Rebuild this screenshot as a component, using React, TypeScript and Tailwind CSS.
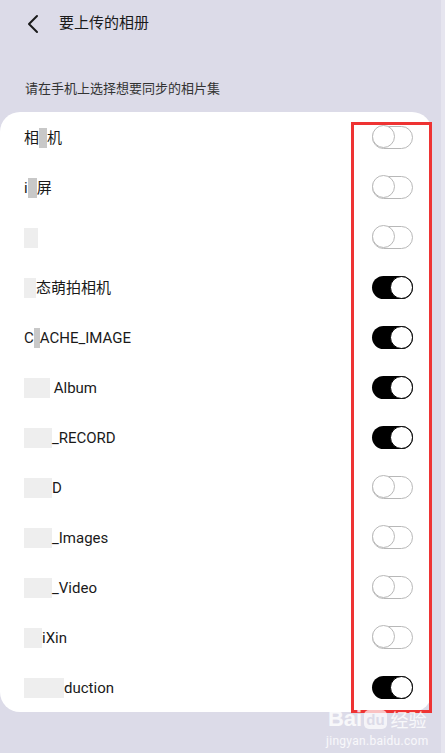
import React from "react";

type Row = { parts: (string | { m: number; w?: number; light?: boolean })[]; on: boolean };

const rows: Row[] = [
  { parts: ["相", { m: 1, w: 8 }, "机"], on: false },
  { parts: ["i", { m: 1, w: 9 }, "屏"], on: false },
  { parts: [{ m: 1, w: 14, light: true }], on: false },
  { parts: [{ m: 1, w: 12, light: true }, "态萌拍相机"], on: true },
  { parts: ["C", { m: 1, w: 6 }, "ACHE_IMAGE"], on: true },
  { parts: [{ m: 1, w: 26, light: true }, " Album"], on: true },
  { parts: [{ m: 1, w: 28, light: true }, "_RECORD"], on: true },
  { parts: [{ m: 1, w: 28, light: true }, "D"], on: false },
  { parts: [{ m: 1, w: 28, light: true }, "_Images"], on: false },
  { parts: [{ m: 1, w: 28, light: true }, "_Video"], on: false },
  { parts: [{ m: 1, w: 18, light: true }, "iXin"], on: false },
  { parts: [{ m: 1, w: 40, light: true }, "duction"], on: true },
];

function Toggle({ on }: { on: boolean }) {
  if (on) {
    return (
      <div className="relative h-[23px] w-[41px] rounded-full bg-black">
        <div className="absolute right-0 top-0 h-[23px] w-[23px] rounded-full border-[1.5px] border-black bg-white" />
      </div>
    );
  }
  return (
    <div className="relative h-[23px] w-[41px] rounded-full border-[1.5px] border-[#b8b8b8] bg-white">
      <div className="absolute left-[-1.5px] top-[-1.5px] h-[23px] w-[23px] rounded-full border-[1.5px] border-[#b8b8b8] bg-white" />
    </div>
  );
}

export default function App() {
  return (
    <div
      className="relative h-[753px] w-[445px] overflow-hidden bg-[#dcdbe8] text-[#111]"
      style={{ fontFamily: "Roboto, 'Noto Sans CJK SC', sans-serif" }}
    >
      {/* header */}
      <div className="flex h-[46px] items-center pl-[26px]">
        <svg width="14" height="20" viewBox="0 0 14 20" className="mt-[1px]">
          <path d="M11 2 L3 10 L11 18" fill="none" stroke="#1a1a1a" strokeWidth="2" strokeLinecap="round" strokeLinejoin="round" />
        </svg>
        <span className="ml-[19px] text-[15px] text-[#1a1a1a]">要上传的相册</span>
      </div>
      <div className="mt-[34px] pl-[25px] text-[13px] leading-[18px] text-[#333]">请在手机上选择想要同步的相片集</div>

      {/* card */}
      <div className="mt-[14px] w-[432px] rounded-[20px] bg-white">
        {rows.map((r, i) => (
          <div key={i} className="flex h-[50px] items-center justify-between pl-[24px] pr-[19px]">
            <div className="mt-[2px] flex items-center text-[15px] text-[#1a1a1a]">
              {r.parts.map((p, j) =>
                typeof p === "string" ? (
                  <span key={j} className="whitespace-pre">{p}</span>
                ) : (
                  <span
                    key={j}
                    className={`inline-block h-[20px] ${p.light ? "bg-[#eeeeee]" : "bg-[#c8c8c8]"}`}
                    style={{ width: p.w }}
                  />
                )
              )}
            </div>
            <Toggle on={r.on} />
          </div>
        ))}
      </div>

      {/* right scroll stripe */}
      <div className="absolute right-0 top-0 h-full w-[4px] bg-[#e6e5ef]" />

      {/* red annotation box */}
      <div className="absolute left-[351px] top-[122px] h-[591px] w-[81px] border-[3px] border-[#ee3333]" />

      {/* watermark */}
      <div className="absolute left-[326px] top-[706px] flex flex-col items-center text-white/80">
        <div className="flex items-center text-[22px] font-bold leading-[26px]" style={{ fontFamily: "Arial, 'Liberation Sans', sans-serif" }}>
          <span>Bai</span>
          <span className="mx-[2px] rounded-[5px] bg-white/70 px-[2px] text-[15px] leading-[19px] text-[#dcdbe8]">du</span>
          <span className="ml-[2px] text-[18px] font-normal" style={{ fontFamily: "'Noto Sans CJK SC', sans-serif" }}>经验</span>
        </div>
        <div className="mt-[2px] text-[12px] leading-[14px] tracking-[0.3px]">jingyan.baidu.com</div>
      </div>
    </div>
  );
}
